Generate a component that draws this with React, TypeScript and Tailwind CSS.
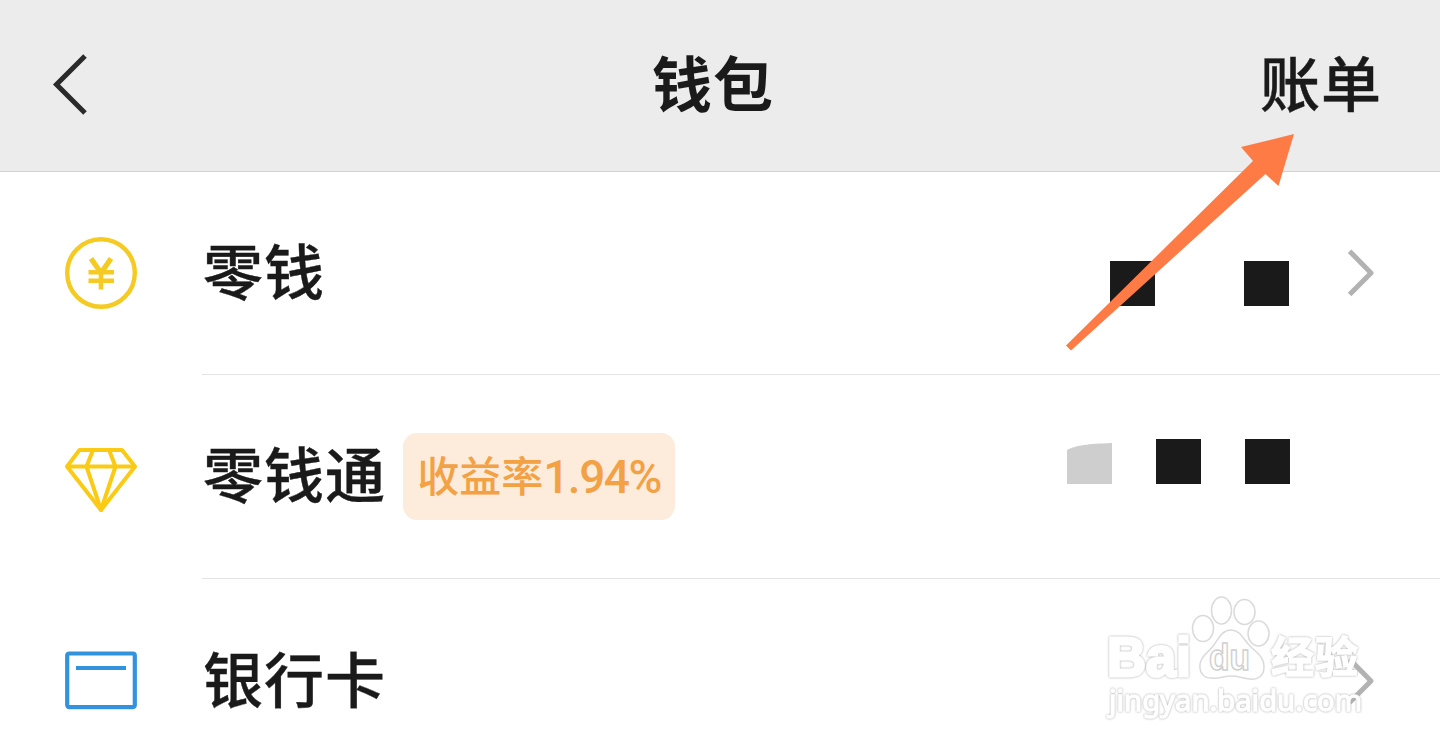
import React from 'react';

interface WalletRowProps {
  icon: React.ReactNode;
  label: string;
  tag?: React.ReactNode;
  last?: boolean;
  children?: React.ReactNode;
}

const BackIcon: React.FC = () => (
  <svg width="40" height="64" viewBox="0 0 40 64" fill="none">
    <path d="M35 3 L6.5 31.5 L35 60" stroke="#2a2a2a" strokeWidth="5" />
  </svg>
);

const ChevronIcon: React.FC = () => (
  <svg width="28" height="48" viewBox="0 0 28 48" fill="none">
    <path d="M2.6 2.2 L24 24 L2.6 45.6" stroke="#b2b2b2" strokeWidth="5" strokeLinejoin="round" />
  </svg>
);

const CoinIcon: React.FC = () => (
  <svg width="72" height="72" viewBox="0 0 72 72" fill="none" stroke="#f5ca22" className="mb-[2px]">
    <circle cx="36" cy="36" r="33.8" strokeWidth="4.4" />
    <path d="M26 21.5 L36 36 L46 21.5" strokeWidth="5.2" />
    <path d="M36 35 V52.5 M23.5 35.2 H49 M23.5 43.8 H49" strokeWidth="4.6" />
  </svg>
);

const DiamondIcon: React.FC = () => (
  <svg width="72" height="72" viewBox="0 0 72 72" fill="none" stroke="#fbcb14" strokeWidth="4" strokeLinejoin="round">
    <path d="M14.5 9 H57 L70 25.5 L36 69 L2 25.5 Z" />
    <path d="M2 25.5 H70 M28 9 L21.5 25.5 L36 69 L50.5 25.5 L44 9" />
  </svg>
);

const CardIcon: React.FC = () => (
  <svg width="72" height="72" viewBox="0 0 72 72" fill="none" stroke="#3292dc" strokeWidth="4.2">
    <rect x="2.2" y="8.5" width="67.6" height="53.6" rx="2" />
    <path d="M11 23 H61" />
  </svg>
);

const WalletRow: React.FC<WalletRowProps> = ({ icon, label, tag, last, children }) => (
  <li className="flex h-[204px] shrink-0 items-center pl-[65px] first:h-[203px]">
    {icon}
    <div className={`ml-[65px] flex h-full flex-1 items-center pr-[65px] ${last ? '' : 'border-b border-[#e3e3e3]'}`}>
      <span className="mb-[9px] ml-px text-[60px] leading-none font-medium tracking-[1px] whitespace-nowrap [-webkit-text-stroke:0.4px_#1a1a1a]">{label}</span>
      {tag && (
        <span className="ml-[17px] flex h-[87px] w-[272px] justify-center rounded-[14px] bg-[#fdecdb] text-[42px] leading-[81px] font-medium whitespace-nowrap text-[#f3a145]">
          {tag}
        </span>
      )}
      <div className="ml-auto flex h-full items-center">{children}</div>
    </div>
  </li>
);

const Watermark: React.FC = () => (
  <svg className="absolute top-[590px] left-[1095px]" width="290" height="140" viewBox="0 0 290 140">
    <g fill="#ffffff" stroke="#dadada" strokeWidth="1.5">
      <ellipse cx="108" cy="38.5" rx="10.5" ry="13" />
      <ellipse cx="126.5" cy="20.5" rx="10" ry="13.5" />
      <ellipse cx="149.5" cy="22" rx="10.5" ry="12.5" />
      <ellipse cx="163.5" cy="43.5" rx="10.5" ry="12.5" />
      <path d="M136 40 C146 40 148 50 157 58 C165 65 169 69 169 77 C169 86 163 90 155 89 C147 88 143 86 136 86 C128 86 124 89 116 88 C109 88 104 83 105 74 C106 66 113 63 119 55 C124 48 127 40 136 40 Z" />
      <text x="114" y="80" fontSize="37" fontWeight="700" stroke="#cfcfcf" textLength="41" lengthAdjust="spacingAndGlyphs" fontFamily="Liberation Sans, Arial, sans-serif">du</text>
    </g>
    <g className="[filter:drop-shadow(0_0_0.8px_#a8a8a8)]" fill="#ffffff" stroke="#ffffff">
      <text x="12" y="86" fontSize="56" fontWeight="700" strokeWidth="3" textLength="84" lengthAdjust="spacingAndGlyphs" fontFamily="Liberation Sans, Arial, sans-serif">Bai</text>
      <text x="176" y="83" fontSize="43" fontWeight="700" strokeWidth="1.5" textLength="87" fontFamily="Noto Sans CJK SC, sans-serif">经验</text>
      <text x="14" y="121" fontSize="29" strokeWidth="1.4" textLength="253" lengthAdjust="spacingAndGlyphs" fontFamily="Noto Sans, sans-serif">jingyan.baidu.com</text>
    </g>
  </svg>
);

const App: React.FC = () => {
  return (
    <div className="relative flex h-[751px] w-[1440px] flex-col overflow-hidden bg-white font-['Noto_Sans_CJK_SC',sans-serif] text-[#1a1a1a]">
      <header className="grid h-[172px] shrink-0 grid-cols-3 items-center border-b border-[#d2d2d2] bg-[#ececec] pr-[58px] pl-[50px] text-[60px] leading-none tracking-[1px]">
        <button aria-label="返回" className="mb-[2px] justify-self-start">
          <BackIcon />
        </button>
        <h1 className="mb-[9px] -ml-[6px] justify-self-center font-bold">钱包</h1>
        <button className="mb-[9px] justify-self-end font-medium [-webkit-text-stroke:0.4px_#1a1a1a]">账单</button>
      </header>

      <ul className="flex flex-col">
        <WalletRow icon={<CoinIcon />} label="零钱">
          <div className="mt-[21px] mr-[58px] flex gap-[89px]">
            <span className="size-[45px] bg-[#1a1a1a]" />
            <span className="size-[45px] bg-[#1a1a1a]" />
          </div>
          <ChevronIcon />
        </WalletRow>
        <WalletRow
          icon={<DiamondIcon />}
          label="零钱通"
          tag={
            <>
              收益率
              <span className="mt-[4px] font-['Roboto',sans-serif] text-[46px] tracking-[-1.5px]">1.94%</span>
            </>
          }
        >
          <div className="mr-[85px] mb-[31px] flex gap-[44px]">
            <svg width="45" height="45" viewBox="0 0 45 45">
              <path d="M0 11 C10 6 20 5 45 4 V45 H0 Z" fill="#cecece" />
            </svg>
            <span className="size-[45px] bg-[#1a1a1a]" />
            <span className="size-[45px] bg-[#1a1a1a]" />
          </div>
        </WalletRow>
        <WalletRow icon={<CardIcon />} label="银行卡" last>
          <ChevronIcon />
        </WalletRow>
      </ul>

      {/* arrow pointing to the bill entry */}
      <svg className="absolute top-[130px] left-[1060px]" width="240" height="225" viewBox="0 0 240 225">
        <path d="M234 4 L181 17 L193 31 L6 215.5 L11 220.5 L205.5 44 L218.5 56 Z" fill="#ff7b45" />
      </svg>
      <Watermark />
    </div>
  );
};

export default App;
